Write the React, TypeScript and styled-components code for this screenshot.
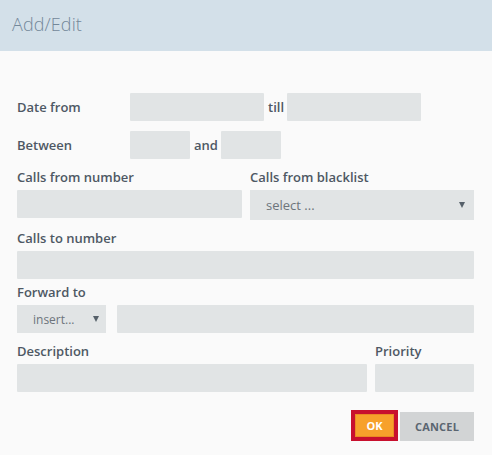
import React from "react";
import styled, { createGlobalStyle } from "styled-components";

const Global = createGlobalStyle`
  html, body { margin: 0; padding: 0; background: #fafafa; }
  body { font-family: "Open Sans", "Noto Sans", sans-serif; }
  * { box-sizing: border-box; }
`;

const Dialog = styled.div`
  width: 492px;
  height: 455px;
  background: #fafafa;
  display: flex;
  flex-direction: column;
`;

const Header = styled.div`
  height: 51px;
  background: #d3e0e9;
  display: flex;
  align-items: center;
  padding: 0 12px 4px;
`;

const Title = styled.h1`
  margin: 0;
  font-weight: 300;
  font-size: 18px;
  color: #74889a;
  letter-spacing: 0.1px;
`;

const Body = styled.div`
  padding: 42px 18px 0 17px;
  display: flex;
  flex-direction: column;
`;

const InlineRow = styled.div<{ $mt?: number }>`
  display: flex;
  align-items: center;
  margin-top: ${(p) => p.$mt ?? 0}px;
`;

const RowLabel = styled.span`
  width: 113px;
  font-size: 13px;
  font-weight: 600;
  color: #4e5864;
`;

const Word = styled.span<{ $w: number }>`
  width: ${(p) => p.$w}px;
  padding-left: 4px;
  font-size: 13px;
  font-weight: 600;
  color: #4e5864;
`;

const Input = styled.div<{ $w?: number; $h?: number }>`
  ${(p) => (p.$w ? `width: ${p.$w}px; flex: none;` : "flex: 1 1 auto;")}
  height: ${(p) => p.$h ?? 28}px;
  min-height: ${(p) => p.$h ?? 28}px;
  background: #e1e4e5;
  border-radius: 1px;
`;

const Grid = styled.div<{ $mt: number; $cols: string; $gap: number }>`
  display: grid;
  grid-template-columns: ${(p) => p.$cols};
  column-gap: ${(p) => p.$gap}px;
  margin-top: ${(p) => p.$mt}px;
  align-items: start;
`;

const Field = styled.div`
  display: flex;
  flex-direction: column;
  min-width: 0;
`;

const Label = styled.label`
  display: block;
  height: 18px;
  line-height: 18px;
  margin-bottom: 4px;
  font-size: 13px;
  font-weight: 600;
  color: #4e5864;
  white-space: nowrap;
`;

const Controls = styled.div`
  display: flex;
  gap: 11px;
`;

const Select = styled.div<{ $w?: number; $h: number; $pl: number; $fs: number; $pr: number }>`
  ${(p) => (p.$w ? `width: ${p.$w}px; flex: none;` : "")}
  height: ${(p) => p.$h}px;
  background: #e1e4e5;
  display: flex;
  align-items: center;
  justify-content: space-between;
  padding: 0 ${(p) => p.$pr}px 0 ${(p) => p.$pl}px;
  font-size: ${(p) => p.$fs}px;
  color: #6d747b;
`;

const Caret = styled.span`
  width: 0;
  height: 0;
  border-left: 3.5px solid transparent;
  border-right: 3.5px solid transparent;
  border-top: 6px solid #56606a;
`;

const Buttons = styled.div`
  display: flex;
  justify-content: flex-end;
  align-items: flex-end;
  gap: 2px;
  margin-top: 18px;
`;

const OkButton = styled.button`
  width: 47px;
  height: 31px;
  border: 4px solid #c8102e;
  outline: none;
  background: #f7a12b;
  box-shadow: inset 0 0 0 1px #ea8a25;
  color: #fff;
  font-family: "Open Sans", sans-serif;
  font-weight: 700;
  font-size: 11px;
  padding: 0;
`;

const CancelButton = styled.button`
  width: 74px;
  height: 29px;
  border: none;
  background: #d2d4d5;
  color: #5a6570;
  font-family: "Open Sans", sans-serif;
  font-weight: 700;
  font-size: 11px;
  letter-spacing: 0.2px;
  padding: 0;
`;

export default function App() {
  return (
    <>
      <Global />
      <Dialog>
        <Header>
          <Title>Add/Edit</Title>
        </Header>
        <Body>
          <InlineRow>
            <RowLabel>Date from</RowLabel>
            <Input $w={134} />
            <Word $w={23}>till</Word>
            <Input $w={134} />
          </InlineRow>
          <InlineRow $mt={10}>
            <RowLabel>Between</RowLabel>
            <Input $w={60} />
            <Word $w={31}>and</Word>
            <Input $w={60} />
          </InlineRow>

          <Grid $mt={9} $cols="225px 1fr" $gap={8}>
            <Field>
              <Label>Calls from number</Label>
              <Input />
            </Field>
            <Field>
              <Label>Calls from blacklist</Label>
              <Select $h={30} $pl={16} $pr={9} $fs={13}>
                <span>select ...</span>
                <Caret />
              </Select>
            </Field>
          </Grid>

          <Grid $mt={9} $cols="1fr" $gap={0}>
            <Field>
              <Label>Calls to number</Label>
              <Input />
            </Field>
          </Grid>

          <Grid $mt={4} $cols="1fr" $gap={0}>
            <Field>
              <Label>Forward to</Label>
              <Controls>
                <Select $w={89} $h={28} $pl={16} $pr={7} $fs={12}>
                  <span>insert...</span>
                  <Caret />
                </Select>
                <Input />
              </Controls>
            </Field>
          </Grid>

          <Grid $mt={9} $cols="350px 1fr" $gap={8}>
            <Field>
              <Label>Description</Label>
              <Input />
            </Field>
            <Field>
              <Label>Priority</Label>
              <Input />
            </Field>
          </Grid>

          <Buttons>
            <OkButton>OK</OkButton>
            <CancelButton>CANCEL</CancelButton>
          </Buttons>
        </Body>
      </Dialog>
    </>
  );
}
